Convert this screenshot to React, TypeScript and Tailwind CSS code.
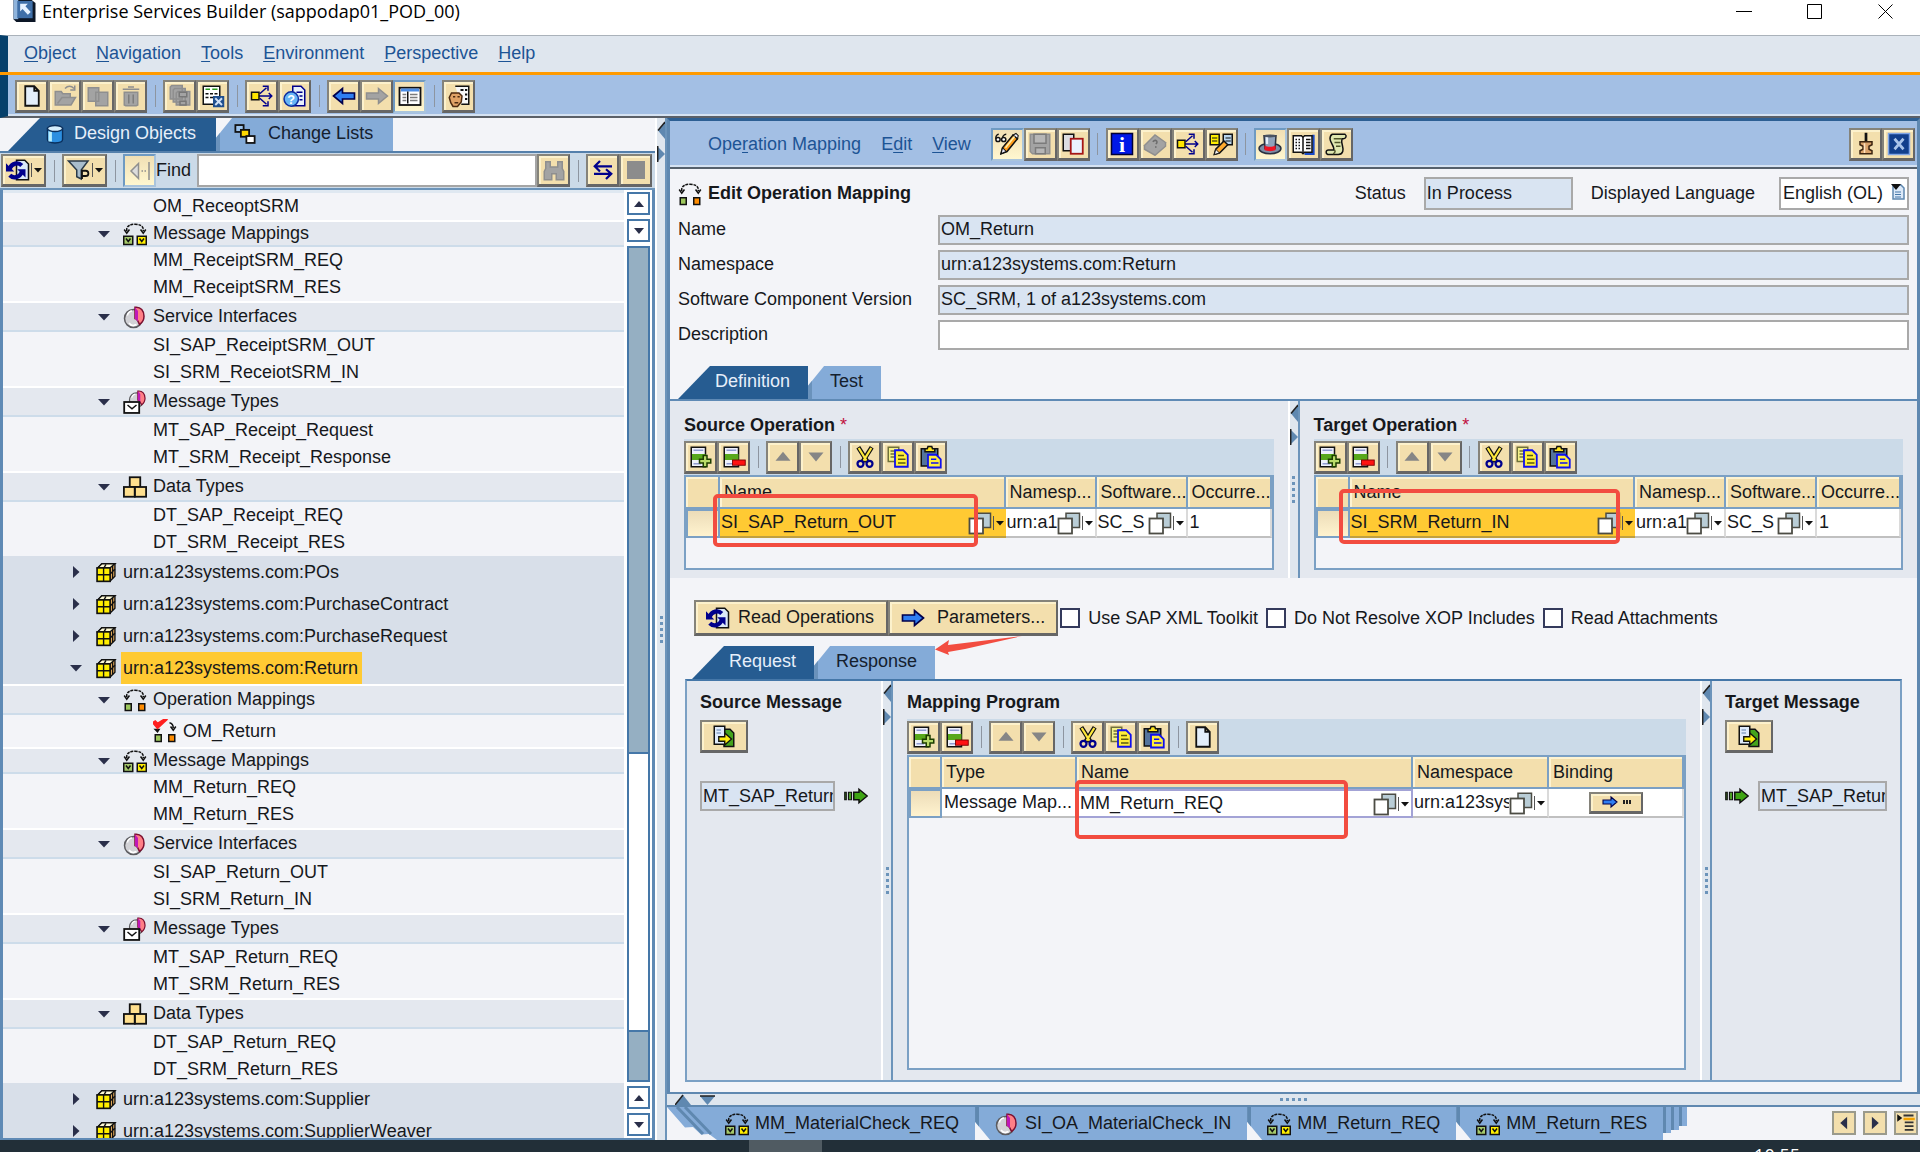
import React, { useState } from 'react';

const NAVY = '#00008c';
const INK = '#111';
const GREY = '#8f8f8f';
const GREY_FILL = '#a3a3a3';

const curve = (
  <g fill="none" stroke={INK} strokeWidth="1">
    <path d="M2.5 6V4.500C3 2.500 5 1.500 8 1.500s5 1 5.500 3V6" strokeDasharray="2 .6" />
    <path d="M.8 5l1.700 2.500L4.300 5M11.700 5l1.800 2.500L15.200 5" />
  </g>
);

const where = (
  <>
    <path d="M5 8h9M6.500 6.500l4.500-4M6.500 9.500l4.500 4M12.500 6l2 2-2 2M8.500 1.500h3.500v3M8.500 14.500h3.500v-3" fill="none" stroke={NAVY} />
    <rect x="1" y="5.500" width="5" height="5" fill="#ffe600" stroke={INK} />
  </>
);

const rowSheet = (
  <>
    <rect x="1.500" y="1.500" width="9.500" height="13" fill="#eef1fb" stroke={INK} />
    <path d="M3 3.500h6.500M3 12.500h5" stroke="#8f9ad0" />
    <rect x="2" y="6" width="9" height="4" fill="#58a81c" />
  </>
);

const cycle = (
  <>
    <path d="M7 1.500h5.500L15 4v10.500H7z" fill="#dce9f8" stroke={INK} />
    <path d="M10.500 5C8 2.500 4 3.500 2.500 7M2.500 11.500c2.500 2.500 6.500 1.500 8-2" fill="none" stroke={NAVY} strokeWidth="2.800" />
    <path d="M0 3.500v5.500h5.500zM13 13V7.500H7.500z" fill={NAVY} />
  </>
);

const globe = (
  <>
    <circle cx="7" cy="9" r="6" fill="#d2d2d6" stroke="#5c5c60" />
    <path d="M3 7c0-2 2-3 3-3M4 12c1 1.500 3 2 5 1" stroke="#fff" fill="none" />
    <path d="M8 1.500c4-.5 6 2.500 6 6s-1.500 4.500-3 5.500C10 11 9.500 9 8 9z" fill="#ff7f86" stroke="#7b1030" />
    <path d="M8 1.500v7.500l2 2V4z" fill="#c018b8" />
  </>
);

const icons: Record<string, React.ReactNode> = {
  newDoc: <path d="M3.500 1.500h6l3 3v10h-9zM9.500 1.500v3h3" fill="#e3eefa" stroke={INK} strokeWidth="1.200" />,
  open: <g fill={GREY_FILL} stroke={GREY}><path d="M1.500 14V5h4l1 1.500h5V9h3.500L12 14zM3 13l3-4h6" /><path d="M8 3c2-2 4-2 6 0M14.500 1v3h-3" fill="none" /></g>,
  copyDis: <g fill={GREY_FILL} stroke={GREY}><path d="M1.500 2.500h7v9h-7zM6.500 5.500h8v9h-8z" /></g>,
  trash: <g fill={GREY_FILL} stroke={GREY}><path d="M3.500 5.500h9V14l-1 .5h-7l-1-.5zM2.500 3.500h11M6 2h4" /><path d="M6.500 7v6M9.500 7v6" stroke="#7d7d7d" /></g>,
  saveAll: <g fill={GREY_FILL} stroke={GREY}><path d="M1.500 2l1-1h7v9h-8zM3.500 4l1-1h7v9h-8zM5.500 6l1-1h8v9h-9z" /><path d="M7.500 5.500h5v3h-5zM8 11.500h4v2.500H8z" stroke="#777" /></g>,
  checkX: (
    <>
      <path d="M1.500 1.500h11v9l-3 3h-8z" fill="#fff" stroke={INK} />
      <path d="M3 3.500h3M7.500 3.500H11" stroke="#2c9a1e" />
      <path d="M3 6.500h2M6 6.500h2M9 6.500h2M3 9h2M6 9h2" stroke={INK} />
      <rect x="8" y="8" width="7.500" height="7.500" fill="#1f4f8f" />
      <path d="M9.500 9.500l4.500 4.500M14 9.500L9.500 14" stroke="#cfe0f6" strokeWidth="1.300" />
    </>
  ),
  where,
  helpDoc: (
    <>
      <path d="M6.500 1.500H12L14.500 4v10.500h-8z" fill="#e8f0fb" stroke={NAVY} />
      <path d="M9 5.500h4M11 8h2M11 10.500h2" stroke={NAVY} />
      <circle cx="5.500" cy="10" r="4.800" fill="#67b5f5" stroke="#0c2ea0" />
      <text x="5.500" y="13" fontSize="8.500" fontWeight="bold" textAnchor="middle" fill="#fff">?</text>
    </>
  ),
  back: <path d="M1 8l6-5v3h8v4H7v3z" fill="#2f7ef2" stroke="#00004c" strokeWidth="1.100" />,
  fwdDis: <path d="M15 8L9 3v3H1v4h8v3z" fill={GREY_FILL} stroke={GREY} />,
  panes: (
    <>
      <rect x="1" y="2.500" width="14" height="11.500" fill="#fff" stroke={INK} strokeWidth="1.200" />
      <path d="M2 4h12" stroke="#4c8ee6" strokeWidth="2" />
      <path d="M6.500 5v8" stroke={INK} />
      <path d="M3 7h2.500M3 9h2.500M3 11h2.500M8 7h5M8 9h5M8 11h5" stroke="#7c7c7c" />
    </>
  ),
  person: (
    <>
      <path d="M5.500 1.500h9v12h-5" fill="#f7f7f7" stroke={INK} />
      <path d="M9 4h2M12 4h1.500M12 7h1.500M12 10h1.500" stroke={INK} strokeWidth="1.400" />
      <path d="M1.500 9l1.500-3h5l2 2-.5 4-2.500 3H4l-1.500-2.500z" fill="#e0a266" stroke="#4c2a10" />
      <path d="M4 8.500h1.500M7 8.500h1.500M5 12.500h2.500" stroke="#4c2a10" />
    </>
  ),
  cylinder: (
    <>
      <path d="M2.500 4v8c0 1.500 2 2.500 5.500 2.500s5.500-1 5.500-2.500V4z" fill="#2c8fe0" stroke="#0a2f5c" />
      <path d="M4.500 6v7.500" stroke="#b9f0ff" strokeWidth="2.500" />
      <ellipse cx="8" cy="4" rx="5.500" ry="2.200" fill="#d6eefc" stroke="#0a2f5c" />
    </>
  ),
  changes: (
    <g stroke={INK} strokeWidth="1.300">
      <rect x="1" y="1.500" width="6" height="5" fill="#9cc4ee" />
      <rect x="5" y="5" width="6" height="5" fill="#ffd800" />
      <rect x="9" y="9.500" width="6" height="5" fill="#fff" />
    </g>
  ),
  cycle,
  funnel: (
    <>
      <path d="M1 2h13L9.500 8v6l-3-1.500V8z" fill="#a9bdcc" stroke="#2b3a48" />
      <path d="M10 14V8.500h2.500a1.700 1.700 0 010 3.500H10" fill="none" stroke={INK} strokeWidth="1.200" />
    </>
  ),
  collapse: <><path d="M7 3L2 8l5 5z" fill="#dcdcdc" stroke={GREY} /><path d="M9 8h1M11 8h1M14 2v12" stroke={GREY} /></>,
  find: <g fill={GREY_FILL} stroke={GREY}><path d="M2.500 2.500h3V6h5V2.500h3V7l1 2v5.500h-5v-4h-3v4h-5V9l1-2z" /></g>,
  swap: <path d="M14 5.500H3M6 2L2.500 5.500 6 9M2 10.500h11M10 7.500l3.500 3-3.500 3.500" fill="none" stroke={NAVY} strokeWidth="1.500" />,
  stop: <rect x="2" y="2" width="12" height="12" fill="#8c8c8c" />,
  opMap: (
    <>
      {curve}
      <rect x="1.500" y="10.500" width="4" height="4.500" fill="#9dc75c" stroke={INK} />
      <rect x="10.500" y="10.500" width="4" height="4.500" fill="#ff8c00" stroke={INK} />
    </>
  ),
  opMapDone: (
    <>
      <path d="M11 2.500c1.500.3 2.500 1 2.500 3.500M11.700 5l1.800 2.500L15.200 5M1.500 7h2.500L3 8.500z" fill="none" stroke={INK} />
      <rect x="1.500" y="10.500" width="4" height="4.500" fill="#9dc75c" stroke={INK} />
      <rect x="10.500" y="10.500" width="4" height="4.500" fill="#ff8c00" stroke={INK} />
      <path d="M0 2.500l3 3.500L9 .5 8 0 3 3 1.500 1.500z" fill="#ff2020" stroke="#ff2020" strokeWidth="1.300" />
    </>
  ),
  msgMap: (
    <>
      {curve}
      <rect x=".5" y="9.500" width="6" height="5.500" fill="#a5c96a" stroke={INK} />
      <rect x="9.500" y="9.500" width="6" height="5.500" fill="#ffee00" stroke={INK} />
      <path d="M2 11l1.500 2L5 11M11 11l1.500 2 1.500-2" fill="none" stroke={INK} />
    </>
  ),
  globe,
  msgType: (
    <>
      <g transform="translate(3.500 -.5) scale(.8)">{globe}</g>
      <rect x=".8" y="8" width="10" height="7.300" fill="#fff" stroke={INK} strokeWidth="1.200" />
      <path d="M3 10l3 2.500L9 10" fill="none" stroke={INK} />
    </>
  ),
  dataType: (
    <g fill="#ffdf8e" stroke={INK} strokeWidth="1.200">
      <rect x="4.500" y="1.500" width="7" height="6.500" />
      <rect x=".6" y="8" width="7.200" height="6.500" />
      <rect x="8" y="8" width="7.400" height="6.500" />
    </g>
  ),
  pack: (
    <>
      <path d="M2 5l3-3h9.500v9l-3.500 3.500" fill="#f5b860" stroke={INK} />
      <path d="M2 5l3-3h9.500L11 5z" fill="#fffbd6" stroke={INK} />
      <rect x="1.500" y="5" width="9.500" height="9.800" fill="#ffee00" stroke={INK} strokeWidth="1.200" />
      <path d="M6.250 5v10M1.500 10H11M11 9.500l3.500-3.500M8 2.500L6.500 5M12.800 3.500v9" stroke={INK} fill="none" />
    </>
  ),
  glasses: (
    <>
      <path d="M.5 4.500c0-3 2-3 2-3M5 4.500c0-3 2.500-3 2.500-3" fill="none" stroke={INK} />
      <circle cx="2" cy="5" r="1.400" fill="#fff" stroke={INK} />
      <circle cx="5.800" cy="5" r="1.400" fill="#fff" stroke={INK} />
      <path d="M4 14.500l1-4 7-8.500 3 2.500-7 8.500z" fill="#ff9c1a" stroke={INK} />
      <path d="M12 2l3 2.500 .5-2-1.500-1.500zM4 14.500l1-4 2.500 2.500z" fill="#e9e9f8" stroke={INK} strokeWidth=".7" />
      <path d="M7 10.500l6-7.500" stroke="#fff2b0" />
    </>
  ),
  saveDis: <g fill={GREY_FILL} stroke={GREY}><path d="M1.500 1.500h13v13H3l-1.500-1.500z" /><path d="M4 1.500h8v6H4zM5 10.500h6.500v4H5z" fill="#b6b6b6" stroke="#7b7b7b" /></g>,
  twoDocs: <><rect x="1.500" y="1.500" width="7" height="11" fill="#dcdde2" stroke={INK} /><rect x="6.500" y="4.500" width="8" height="10" fill="#eaf3ff" stroke="#a51616" strokeWidth="1.200" /></>,
  info: (
    <>
      <rect x="1" y="1" width="14" height="14" fill="#0018e8" stroke="#000038" />
      <text x="8" y="13.200" fontSize="14.500" fontWeight="bold" fontFamily="Liberation Serif" textAnchor="middle" fill="#fff">i</text>
    </>
  ),
  bookDis: <g fill={GREY_FILL} stroke={GREY}><path d="M1 9l7-7 7 5-7 7z" /><path d="M1 9v2.500L8 15.500l7-6V7" /><path d="M6.500 6.500c2-2 4 0 2 1.500M8 10h1" stroke="#6c6c6c" fill="none" /></g>,
  mapEdit: (
    <>
      <rect x=".8" y="1.500" width="6" height="7" fill="#ffee00" stroke={INK} />
      <rect x="9.500" y="1.500" width="6" height="7" fill="#b9d6ee" stroke={INK} />
      <path d="M2 4h3.500M2 6h3.500M11 4h3.500M11 6h3.500" stroke={INK} strokeWidth=".8" />
      <path d="M3.500 15l1-3.500L10 6l2.500 2.500L7 14z" fill="#ffab2e" stroke={INK} />
      <path d="M3.500 15l1-3.500L7 14z" fill="#f2f2f2" stroke={INK} strokeWidth=".6" />
    </>
  ),
  hat: (
    <>
      <ellipse cx="8" cy="11" rx="7.300" ry="3.500" fill="#7d8ea6" stroke="#2a3140" />
      <path d="M4 2.500h8l-.6 8.500c-2 1-5 1-6.800 0z" fill="#8fa2bb" stroke="#2a3140" />
      <path d="M6 3v5" stroke="#e5eefa" strokeWidth="1.500" />
      <path d="M4.300 9c2 1.200 5.300 1.200 7.400 0v3c-2 1-5.400 1-7.400 0z" fill="#f01424" />
      <ellipse cx="8" cy="2.600" rx="4" ry="1" fill="#4a5362" />
    </>
  ),
  bookOpen: (
    <>
      <path d="M14 2.500h1v12H9" stroke="#1749c8" strokeWidth="1.500" fill="none" />
      <path d="M1.500 2.500H7L8 3.500l1-1h5v11H9l-1 1-1-1H1.500z" fill="#fff" stroke={INK} />
      <path d="M8 3.500v11M3 5h1M5 5h1M3 7h1M5 7h1M3 9h1M5 9h1M3 11h1M5 11h1M10 5h3M10 7h3M10 9h3M10 11h3" stroke={INK} />
    </>
  ),
  scroll: (
    <>
      <path d="M5.500 1.500h8.500c1.500 1 .5 3-1 3h-1c-1 3 1.500 6 .5 8.500-.5 1.500-2 2-3 2h-7c-1.500-.5-1.500-3 .5-3h3.500C7 9.500 4 7 4 4.500c0-1.500.5-2.500 1.500-3z" fill="#dfe6ae" stroke={INK} />
      <path d="M6.500 4.500h5M7 7h4M8 9.500h3M6.500 12c1 0 1.500 2-.5 2.500" stroke="#50552a" fill="none" />
    </>
  ),
  pin: (
    <>
      <path d="M8 .5v7" stroke={INK} strokeWidth="1.800" />
      <path d="M4 6.500h8v2l-2 1v2l2 1v2H4v-2l2-1v-2l-2-1z" fill="#d9a26b" stroke="#3b2410" />
      <path d="M7 7.500v6.500" stroke="#ffe3c0" />
    </>
  ),
  closeBox: <><rect x="1" y="1" width="14" height="14" fill="#123f8c" stroke="#7fa5e6" /><path d="M5 4.500l6 7M11 4.500l-6 7" stroke="#a9c4ea" strokeWidth="1.800" /></>,
  addRow: <>{rowSheet}<path d="M9.500 7h2.500v2.500H14.500V12H12v2.500H9.500V12H7V9.500h2.500z" fill="#b9dc6a" stroke="#1c3d00" /></>,
  delRow: <>{rowSheet}<rect x="7" y="10" width="8.500" height="3.500" fill="#ff1212" stroke="#7a0000" strokeWidth=".6" /></>,
  up: <path d="M8 4.500l5 6H3z" fill="#868686" />,
  down: <path d="M8 11l5-6H3z" fill="#868686" />,
  cut: (
    <>
      <path d="M3.500 1.500L9.500 11M12.500 1.500L6.500 11" stroke={INK} strokeWidth="3" />
      <path d="M3.800 2L9 10.500M12.200 2L7 10.500" stroke="#ffe93b" strokeWidth="1.500" />
      <circle cx="5" cy="12.500" r="2" fill="none" stroke={NAVY} strokeWidth="1.500" />
      <circle cx="11" cy="12.500" r="2" fill="none" stroke={NAVY} strokeWidth="1.500" />
    </>
  ),
  copy: (
    <>
      <path d="M1.500 1.500h7v9.500h-7z" fill="#f4f08a" stroke="#70713a" />
      <path d="M3 4h3M3 6h3M3 8h3" stroke="#70713a" />
      <path d="M6 3.500h5.500L14.500 6.500v8H6z" fill="#ffee38" stroke="#1010ee" strokeWidth="1.200" />
      <path d="M8 7h4M8 9.500h5M8 12h5" stroke="#5b5a10" />
    </>
  ),
  paste: (
    <>
      <rect x="1.500" y="2.500" width="11" height="11.500" fill="#54749c" stroke={INK} />
      <path d="M4 4.500V2.500h1.500L6 1h2.500L9 2.500h1.500v2z" fill="#ffe61c" stroke={INK} />
      <path d="M6 6.500h5.500L14.500 9.500v5.500H6z" fill="#ffee38" stroke="#1010ee" strokeWidth="1.200" />
      <path d="M8 9.500h3.500M8 12h5" stroke="#1010ee" />
    </>
  ),
  assign: (
    <>
      <path d="M8 3.500h4l2.500 2.500v9H8z" fill="#44a31c" stroke={INK} />
      <path d="M1.500 1.500h7v12h-7z" fill="#dfeafb" stroke={INK} />
      <path d="M3 4h3M3 6h3" stroke="#8aa4c8" />
      <path d="M4.500 8.500h4V6l4.500 4-4.500 4v-2.500h-4z" fill="#ffee10" stroke={INK} strokeWidth=".9" />
    </>
  ),
  flow: (
    <>
      <path d="M.5 5.500h1v5h-1zM3 5.500h2v5H3z" fill="#54b02a" stroke={INK} strokeWidth=".8" />
      <path d="M6.500 5.500H10V3.500l5.500 4.500-5.500 4.500v-2H6.500z" fill="#3fa414" stroke={INK} />
    </>
  ),
  go: <path d="M15 8L9 3v3H1v4h8v3z" fill="#2f7ef2" stroke="#00004c" strokeWidth="1.100" />,
  valueHelp: <><rect x="6" y="1.500" width="9" height="9.500" fill="#b9cdd6" stroke="#4c4c44" /><rect x="1" y="5" width="9" height="10" fill="#fff" stroke="#4c4c44" strokeWidth="1.200" /></>,
};

const Icon: React.FC<{ name: string; className?: string }> = ({ name, className = 'h-6 w-6' }) => (
  <svg viewBox="0 0 16 16" className={`shrink-0 ${className}`} aria-hidden="true">{icons[name]}</svg>
);

const raised = 'border-2 border-b-3 border-t-[#85837a] border-l-[#85837a] border-r-[#666] border-b-[#666] bg-[#f3dfad] shadow-[inset_1px_1px_0_1px_#fcf1cc]';
const pressed = 'border-2 border-t-[#6f9ac2] border-l-[#6f9ac2] border-r-[#a9c4dc] border-b-[#a9c4dc] bg-linear-to-b from-[#f0dfb4] to-[#fff7d0]';

const IconButton: React.FC<{ name: string; active?: boolean; className?: string }> = ({ name, active, className = 'w-[33px]' }) => (
  <button type="button" aria-label={name} className={`flex h-[33px] shrink-0 items-center justify-center ${active ? pressed : raised} ${className}`}>
    <Icon name={name} />
  </button>
);

const Sep = () => (
  <span className="flex w-4 shrink-0 justify-center"><span className="h-[22px] w-px bg-[#8d95a0]" /></span>
);

// '|' draws a separator, a leading '*' marks a pressed button
const Tools: React.FC<{ items: string[] }> = ({ items }) => (
  <div className="flex items-center">
    {items.map((item, i) =>
      item === '|' ? <Sep key={i} /> : <IconButton key={i} name={item.replace('*', '')} active={item.startsWith('*')} />
    )}
  </div>
);

const DropMark = () => (
  <svg viewBox="0 0 12 18" className="h-[18px] w-3 shrink-0" aria-hidden="true">
    <path d="M1.500 2v14" stroke="#555" />
    <path d="M4 7h8l-4 4.500z" fill="#111" />
  </svg>
);

const DropButton: React.FC<{ name: string }> = ({ name }) => (
  <button type="button" aria-label={name} className={`flex h-[33px] w-[45px] shrink-0 items-center justify-center ${raised}`}>
    <Icon name={name} />
    <DropMark />
  </button>
);

const Splitter = () => (
  <div className="grid w-3 shrink-0 grid-rows-[1fr_auto_1fr] border-r-2 border-l-2 border-l-white border-r-[#6c94ba] bg-[#dfe6ee]">
    <svg viewBox="0 0 8 44" className="h-11 w-2" aria-hidden="true">
      <path d="M8 4v17L1 12.500z" fill="#5f88b0" />
      <path d="M8 4L1 12.500" stroke="#222" strokeWidth="1.500" />
      <path d="M0 28v16l8-8z" fill="#5f88b0" />
      <path d="M.7 28v16" stroke="#222" strokeWidth="1.500" />
    </svg>
    <div className="flex flex-col items-center gap-[3px]">
      {[0, 1, 2, 3, 4].map((d) => <span key={d} className="h-[3px] w-[3px] bg-[#6c94ba]" />)}
    </div>
  </div>
);

const Menu: React.FC<{ label: string; hot: number }> = ({ label, hot }) => (
  <button type="button" className="text-[#1d5495]">
    {label.slice(0, hot)}<u className="underline-offset-2">{label[hot]}</u>{label.slice(hot + 1)}
  </button>
);

const Tab: React.FC<{ label: string; icon?: string; active?: boolean }> = ({ label, icon, active }) => (
  <button
    type="button"
    role="tab"
    aria-selected={!!active}
    className={active
      ? `flex h-[33px] items-center gap-2 bg-[#265c91] pb-[2px] text-[#e6effa] [clip-path:polygon(32px_0,100%_0,100%_100%,0_100%)] ${icon ? 'pr-5 pl-9' : 'pr-[18px] pl-[37px]'}`
      : `flex h-[33px] items-center gap-3 border-l-4 border-[#6a92bb] bg-[#84abd8] pb-[2px] text-[#14202e] [clip-path:polygon(16px_0,100%_0,100%_100%,0_100%,0_60%)] ${icon ? 'pr-5 pl-[14px]' : 'pr-[18px] pl-[18px]'}`}
  >
    {icon && <Icon name={icon} className="h-[22px] w-[22px]" />}
    {label}
  </button>
);

interface Node {
  kind: 'ns' | 'group' | 'leaf';
  label: string;
  icon?: string;
  open?: boolean;
  tight?: boolean;
}

const tree: Node[] = [
  { kind: 'leaf', label: 'OM_ReceoptSRM' },
  { kind: 'group', label: 'Message Mappings', icon: 'msgMap', tight: true },
  { kind: 'leaf', label: 'MM_ReceiptSRM_REQ' },
  { kind: 'leaf', label: 'MM_ReceiptSRM_RES' },
  { kind: 'group', label: 'Service Interfaces', icon: 'globe' },
  { kind: 'leaf', label: 'SI_SAP_ReceiptSRM_OUT' },
  { kind: 'leaf', label: 'SI_SRM_ReceiotSRM_IN' },
  { kind: 'group', label: 'Message Types', icon: 'msgType' },
  { kind: 'leaf', label: 'MT_SAP_Receipt_Request' },
  { kind: 'leaf', label: 'MT_SRM_Receipt_Response' },
  { kind: 'group', label: 'Data Types', icon: 'dataType' },
  { kind: 'leaf', label: 'DT_SAP_Receipt_REQ' },
  { kind: 'leaf', label: 'DT_SRM_Receipt_RES' },
  { kind: 'ns', label: 'urn:a123systems.com:POs' },
  { kind: 'ns', label: 'urn:a123systems.com:PurchaseContract' },
  { kind: 'ns', label: 'urn:a123systems.com:PurchaseRequest' },
  { kind: 'ns', label: 'urn:a123systems.com:Return', open: true },
  { kind: 'group', label: 'Operation Mappings', icon: 'opMap' },
  { kind: 'leaf', label: 'OM_Return', icon: 'opMapDone' },
  { kind: 'group', label: 'Message Mappings', icon: 'msgMap', tight: true },
  { kind: 'leaf', label: 'MM_Return_REQ' },
  { kind: 'leaf', label: 'MM_Return_RES' },
  { kind: 'group', label: 'Service Interfaces', icon: 'globe' },
  { kind: 'leaf', label: 'SI_SAP_Return_OUT' },
  { kind: 'leaf', label: 'SI_SRM_Return_IN' },
  { kind: 'group', label: 'Message Types', icon: 'msgType' },
  { kind: 'leaf', label: 'MT_SAP_Return_REQ' },
  { kind: 'leaf', label: 'MT_SRM_Return_RES' },
  { kind: 'group', label: 'Data Types', icon: 'dataType' },
  { kind: 'leaf', label: 'DT_SAP_Return_REQ' },
  { kind: 'leaf', label: 'DT_SRM_Return_RES' },
  { kind: 'ns', label: 'urn:a123systems.com:Supplier' },
  { kind: 'ns', label: 'urn:a123systems.com:SupplierWeaver' },
];

const Twisty: React.FC<{ open: boolean }> = ({ open }) => (
  <button type="button" aria-label={open ? 'Collapse' : 'Expand'} className="w-[14px] shrink-0">
    <svg viewBox="0 0 14 14" className="h-[14px] w-[14px]">
      <path d={open ? 'M1 4h12l-6 6.500z' : 'M4 1v12l6.500-6z'} fill="#2a2f4a" />
    </svg>
  </button>
);

const TreeRow: React.FC<{ node: Node; selected: boolean; onSelect: () => void }> = ({ node, selected, onSelect }) => {
  const label = (
    <span onClick={onSelect} className={`ml-1 flex h-full items-center pl-[2px] pr-1 ${selected ? 'bg-[#ffca33]' : ''}`}>{node.label}</span>
  );
  if (node.kind === 'ns') {
    return (
      <li className="flex h-8 shrink-0 items-center bg-[#d8dfe9] pl-[66px]">
        <Twisty open={!!node.open} />
        <Icon name="pack" className="ml-3 h-[22px] w-[22px]" />
        {label}
      </li>
    );
  }
  if (node.kind === 'group') {
    return (
      <li className={`flex shrink-0 items-center border-y-2 border-t-white border-b-[#cddcea] bg-[#e4e8ef] pl-[94px] ${node.tight ? 'h-[27px]' : 'h-[31px]'}`}>
        <Twisty open />
        <Icon name={node.icon!} className="ml-3 h-6 w-6" />
        {label}
      </li>
    );
  }
  return (
    <li className={`flex shrink-0 items-center ${node.icon ? 'h-8 pl-[150px]' : 'h-[27px] pl-[144px]'}`}>
      {node.icon && <Icon name={node.icon} />}
      {label}
    </li>
  );
};

const ScrollButton: React.FC<{ dir: 'up' | 'down' }> = ({ dir }) => (
  <button type="button" aria-label={`Scroll ${dir}`} className="flex h-[23px] shrink-0 items-center justify-center border-2 border-[#4577a8] bg-white">
    <svg viewBox="0 0 12 8" className="h-2 w-3"><path d={dir === 'up' ? 'M6 1l5 6H1z' : 'M6 7l5-6H1z'} fill="#2a2f4a" /></svg>
  </button>
);

const Navigator = () => {
  const [selected, setSelected] = useState('urn:a123systems.com:Return');
  return (
    <aside className="flex w-[655px] shrink-0 flex-col bg-[#f3f4f8]">
      <div role="tablist" className="flex pl-2">
        <Tab label="Design Objects" icon="cylinder" active />
        <Tab label="Change Lists" icon="changes" />
      </div>
      <div className="flex h-[39px] shrink-0 items-center border-y-2 border-t-[#5580ab] border-b-[#6c94ba] bg-[#cbdae8] pr-[3px] pl-px">
        <DropButton name="cycle" />
        <Sep />
        <DropButton name="funnel" />
        <Sep />
        <IconButton name="collapse" active />
        <label htmlFor="find" className="pr-[6px]">Find</label>
        <input id="find" className="h-[33px] min-w-0 flex-1 border-2 border-[#a5a5a5] bg-white px-1" />
        <Tools items={['find', '|', 'swap', 'stop']} />
      </div>
      <div className="flex min-h-0 flex-1 border-x-3 border-b-2 border-[#5f8ab5]">
        <ul className="flex min-w-0 flex-1 flex-col overflow-hidden border-t-3 border-[#dfe8f1]">
          {tree.map((node, i) => (
            <TreeRow key={i} node={node} selected={node.label === selected} onSelect={() => setSelected(node.label)} />
          ))}
        </ul>
        <div className="flex w-7 shrink-0 flex-col gap-1 bg-white py-[2px] pr-[2px] pl-[3px]">
          <ScrollButton dir="up" />
          <ScrollButton dir="down" />
          <div className="flex min-h-0 flex-1 flex-col border-2 border-[#4577a8] bg-[#95afc2]">
            <div className="flex-[509]" />
            <div className="flex-[279] border-y-2 border-[#4577a8] bg-white" />
            <div className="flex-[49]" />
          </div>
          <ScrollButton dir="up" />
          <ScrollButton dir="down" />
        </div>
      </div>
    </aside>
  );
};

const Field: React.FC<{ id: string; label: string; value?: string; editable?: boolean }> = ({ id, label, value = '', editable }) => (
  <div className="flex items-center">
    <label htmlFor={id} className="w-[260px] shrink-0 pb-[2px]">{label}</label>
    <input
      id={id}
      defaultValue={value}
      readOnly={!editable}
      className={`h-[30px] min-w-0 flex-1 border-2 border-[#a9a9a9] px-px pb-[2px] ${editable ? 'bg-white' : 'bg-[#d9e4f2]'}`}
    />
  </div>
);

const Mark: React.FC<{ className: string }> = ({ className }) => (
  <div className={`pointer-events-none absolute rounded-[5px] border-4 border-[#f24c40] ${className}`} />
);

const HelpCell: React.FC<{ label: string; value: string }> = ({ label, value }) => (
  <div className="flex items-center pr-[2px]">
    <input aria-label={label} defaultValue={value} className="h-[25px] min-w-0 flex-1 pl-px" />
    <Icon name="valueHelp" />
    <DropMark />
  </div>
);

const th = 'h-8 overflow-hidden border-r-2 border-b-2 border-[#7ba0c4] bg-[#f3dfad] pl-1 text-left font-normal whitespace-nowrap shadow-[inset_2px_2px_0_#fdf3d2]';
const td = 'h-7 border-r-2 border-b-2 border-r-[#dadada] border-b-[#c0c0c0] bg-white p-0';
const handle = 'h-7 border-2 border-[#7ba0c4] bg-linear-to-b from-[#ecdcb8] to-[#fff3cf] p-0';

const Operation: React.FC<{ title: string; value: string; markClass: string }> = ({ title, value, markClass }) => (
  <section className="min-w-0 flex-1 bg-[#e4e8ef] px-[14px] pt-[11px] pb-2">
    <h2 className="h-[27px] font-bold">{title} <span className="font-normal text-[#c01040]">*</span></h2>
    <div className="flex h-9 items-center bg-[#cbdae8]">
      <Tools items={['addRow', 'delRow', '|', 'up', 'down', '|', 'cut', 'copy', 'paste']} />
    </div>
    <div className="relative h-[95px] border-2 border-[#7ba0c4] bg-[#f3f4f8]">
      <table className="w-full table-fixed border-separate border-spacing-0">
        <colgroup>
          <col className="w-[34px]" />
          <col />
          <col className="w-[91px]" />
          <col className="w-[91px]" />
          <col className="w-[84px]" />
        </colgroup>
        <thead>
          <tr>
            <th className={th} />
            <th className={th}>Name</th>
            <th className={th}>Namesp...</th>
            <th className={th}>Software...</th>
            <th className={th}>Occurre...</th>
          </tr>
        </thead>
        <tbody>
          <tr>
            <td className={handle} />
            <td className="h-7 border-b-2 border-[#c0a040] bg-[#ffca33] p-0"><HelpCell label="Name" value={value} /></td>
            <td className={td}><HelpCell label="Namespace" value="urn:a1" /></td>
            <td className={td}><HelpCell label="Software Component" value="SC_S" /></td>
            <td className={`${td} pl-[2px]`}>1</td>
          </tr>
        </tbody>
      </table>
      <Mark className={markClass} />
    </div>
  </section>
);

const Message: React.FC<{ id: string; title: string; value: string; target?: boolean }> = ({ id, title, value, target }) => (
  <section className={`shrink-0 px-[13px] pt-2 ${target ? 'w-[188px]' : 'w-[194px]'}`}>
    <h2 className="mb-1 h-[27px] font-bold whitespace-nowrap"><label htmlFor={id}>{title}</label></h2>
    <IconButton name="assign" className="w-12" />
    <div className={`mt-7 flex items-center gap-[9px] ${target ? 'flex-row-reverse' : ''}`}>
      <input id={id} readOnly defaultValue={value} className="h-[30px] min-w-0 flex-1 border-2 border-[#a9a9a9] bg-[#d9e4f2] pl-px" />
      <Icon name="flow" />
    </div>
  </section>
);

const MappingProgram = () => (
  <section className="flex min-w-0 flex-1 flex-col px-[14px] pt-2 pb-[10px]">
    <h2 className="mb-[3px] h-[27px] font-bold">Mapping Program</h2>
    <div className="flex h-9 shrink-0 items-center bg-[#cbdae8]">
      <Tools items={['addRow', 'delRow', '|', 'up', 'down', '|', 'cut', 'copy', 'paste', '|', 'newDoc']} />
    </div>
    <div className="relative flex-1 border-2 border-[#7ba0c4] bg-[#f3f4f8]">
      <table className="w-full table-fixed border-separate border-spacing-0">
        <colgroup>
          <col className="w-[33px]" />
          <col className="w-[135px]" />
          <col />
          <col className="w-[136px]" />
          <col className="w-[135px]" />
        </colgroup>
        <thead>
          <tr>
            <th className={th} />
            <th className={th}>Type</th>
            <th className={th}>Name</th>
            <th className={th}>Namespace</th>
            <th className={th}>Binding</th>
          </tr>
        </thead>
        <tbody>
          <tr>
            <td className={handle} />
            <td className={`${td} pl-[2px] whitespace-nowrap`}>Message Map...</td>
            <td className="h-7 border-2 border-[#a3a3d6] bg-white p-0"><HelpCell label="Name" value="MM_Return_REQ" /></td>
            <td className={td}><HelpCell label="Namespace" value="urn:a123systems.com:Return" /></td>
            <td className={td}>
              <button type="button" aria-label="Binding" className={`mx-auto flex h-[22px] w-[54px] items-center justify-center gap-1 ${raised}`}>
                <Icon name="go" className="h-4 w-[18px]" />
                <span className="flex gap-px"><i className="h-1 w-[2px] bg-[#222]" /><i className="h-1 w-[2px] bg-[#222]" /><i className="h-1 w-[2px] bg-[#222]" /></span>
              </button>
            </td>
          </tr>
        </tbody>
      </table>
      <Mark className="top-[23px] left-[166px] h-[59px] w-[273px]" />
    </div>
  </section>
);

const Check: React.FC<{ label: string }> = ({ label }) => (
  <label className="flex items-center gap-2 pr-2 whitespace-nowrap">
    <input type="checkbox" className="h-5 w-5 appearance-none border-2 border-[#343a5c] bg-white" />
    {label}
  </label>
);

const openObjects = [
  { icon: 'msgMap', label: 'MM_MaterialCheck_REQ' },
  { icon: 'globe', label: 'SI_OA_MaterialCheck_IN' },
  { icon: 'msgMap', label: 'MM_Return_REQ' },
  { icon: 'msgMap', label: 'MM_Return_RES' },
];

const NavButton: React.FC<{ label: string; children: React.ReactNode }> = ({ label, children }) => (
  <button type="button" aria-label={label} className="flex h-6 w-6 items-center justify-center border-2 border-[#9a9a8c] bg-[#f3dfad]">
    <svg viewBox="0 0 16 16" className="h-5 w-5 shrink-0">{children}</svg>
  </button>
);

const ObjectTabs = () => (
  <div className="flex h-[33px] shrink-0 items-start bg-[#f3f4f8]">
    <svg viewBox="0 0 50 33" className="h-[33px] w-[50px] shrink-0" aria-hidden="true">
      <path d="M0 0h50v33L42 27l-8 .5-8-7.500-8 .5z" fill="#84abd8" />
      <path d="M10 0l26 27M18 0l26 27" stroke="#5f88b0" strokeWidth="3" />
    </svg>
    {openObjects.map((o, i) => (
      <button
        key={o.label}
        type="button"
        className={`flex h-[33px] items-center gap-[6px] bg-[#84abd8] pr-4 whitespace-nowrap ${i ? 'border-l-4 border-[#5f88b0] pl-4 [clip-path:polygon(0_0,100%_0,100%_100%,15px_100%,0_45%)]' : 'pl-2'}`}
      >
        <Icon name={o.icon} />
        {o.label}
      </button>
    ))}
    <span className="h-[26px] w-2 border-l-3 border-[#5f88b0] bg-[#84abd8]" />
    <span className="h-[23px] w-2 border-l-3 border-[#5f88b0] bg-[#84abd8]" />
    <span className="h-[19px] w-2 border-l-3 border-[#5f88b0] bg-[#84abd8]" />
    <div className="ml-auto flex gap-[7px] pt-1 pr-[2px]">
      <NavButton label="Previous"><path d="M10.500 3v10L5 8z" fill="#2a2f4a" /></NavButton>
      <NavButton label="Next"><path d="M5.500 3v10L11 8z" fill="#2a2f4a" /></NavButton>
      <NavButton label="List">
        <path d="M1 1l4 3-4 3z" fill="#111" />
        <path d="M6 2h8M7 7.500h7M7 10.500h7M7 13.500h7" stroke="#333" strokeWidth="1.500" />
        <path d="M6 4.800h9" stroke="#f0a000" strokeWidth="2" />
      </NavButton>
    </div>
  </div>
);

const Editor = () => (
  <main className="flex min-w-0 flex-1 flex-col">
    <div className="flex min-h-0 flex-1 flex-col border-x-3 border-t-3 border-b-2 border-[#5f88b0] border-t-[#2d5f93] bg-[#f3f4f8]">
      <div className="flex h-12 shrink-0 items-center gap-5 border-b-2 border-[#55606c] bg-[#a3bfe4] pr-[2px] pl-[38px] shadow-[inset_0_-2px_0_#d5e2f2]">
        <Menu label="Operation Mapping" hot={3} />
        <Menu label="Edit" hot={1} />
        <Menu label="View" hot={0} />
        <Tools items={['*glasses', 'saveDis', 'twoDocs', '|', 'info', 'bookDis', 'where', 'mapEdit', '|', '*hat', 'bookOpen', 'scroll']} />
        <div className="ml-auto"><Tools items={['pin', 'closeBox']} /></div>
      </div>

      <div className="flex flex-col gap-[5px] px-2 pt-2">
        <div className="flex items-center">
          <Icon name="opMap" />
          <h1 className="flex-1 pl-[6px] font-bold">Edit Operation Mapping</h1>
          <label htmlFor="status" className="pr-[18px]">Status</label>
          <input id="status" readOnly defaultValue="In Process" className="h-[33px] w-[149px] border-2 border-[#a9a9a9] bg-[#d9e4f2] px-px" />
          <label htmlFor="lang" className="pr-6 pl-[18px]">Displayed Language</label>
          <div className="relative">
            <select id="lang" className="h-[33px] w-[130px] appearance-none border-2 border-[#a9a9a9] bg-white pl-[2px]">
              <option>English (OL)</option>
            </select>
            <svg viewBox="0 0 14 16" className="pointer-events-none absolute top-[7px] right-1 h-4 w-[14px]" aria-hidden="true">
              <path d="M2 1h8l3 3v11H2z" fill="#dce9f8" stroke="#5f88b0" strokeWidth="1.500" />
              <path d="M4 8h6M4 10.500h6M4 13h6" stroke="#4577a8" />
              <path d="M0 0h10L5 6z" fill="#111" />
            </svg>
          </div>
        </div>
        <Field id="name" label="Name" value="OM_Return" />
        <Field id="namespace" label="Namespace" value="urn:a123systems.com:Return" />
        <Field id="swcv" label="Software Component Version" value="SC_SRM, 1 of a123systems.com" />
        <Field id="description" label="Description" editable />
      </div>

      <div role="tablist" className="mt-4 flex pl-2">
        <Tab label="Definition" active />
        <Tab label="Test" />
      </div>
      <div className="flex border-t-2 border-[#5f8ab5]">
        <Operation title="Source Operation" value="SI_SAP_Return_OUT" markClass="top-[17px] left-[27px] h-[53px] w-[265px]" />
        <Splitter />
        <Operation title="Target Operation" value="SI_SRM_Return_IN" markClass="top-[12px] left-[23px] h-[55px] w-[281px]" />
      </div>

      <div className="mt-[22px] flex items-center pl-6">
        <button type="button" className={`flex h-9 items-center gap-2 pr-3 pl-[10px] ${raised}`}><Icon name="cycle" />Read Operations</button>
        <button type="button" className={`flex h-9 items-center gap-3 px-[11px] ${raised}`}><Icon name="go" />Parameters...</button>
        <span className="w-[2px]" />
        <Check label="Use SAP XML Toolkit" />
        <Check label="Do Not Resolve XOP Includes" />
        <Check label="Read Attachments" />
      </div>

      <div role="tablist" className="mt-[10px] flex pl-[22px]">
        <Tab label="Request" active />
        <div className="relative">
          <Tab label="Response" />
          <svg viewBox="0 0 88 20" className="pointer-events-none absolute -top-[10px] left-full h-5 w-[88px]" aria-hidden="true">
            <path d="M0 13.500L14 4l-1 5L87 0 30 13l-17 3 1 3z" fill="#f24c40" />
          </svg>
        </div>
      </div>
      <div className="mx-[15px] mb-[10px] flex min-h-0 flex-1 border-2 border-[#7ba0c4] border-t-[#4577a8] bg-[#e4e8ef]">
        <Message id="srcMsg" title="Source Message" value="MT_SAP_Return_REQ" />
        <Splitter />
        <MappingProgram />
        <Splitter />
        <Message id="tgtMsg" title="Target Message" value="MT_SAP_Return_REQ" target />
      </div>
    </div>

    <div className="grid h-[13px] shrink-0 grid-cols-[1fr_auto_1fr] items-center border-b-2 border-[#5f88b0] bg-[#dfe6ee]">
      <svg viewBox="0 0 44 11" className="ml-2 h-[11px] w-11" aria-hidden="true">
        <path d="M0 11L8 1l8 10z" fill="#5f88b0" />
        <path d="M0 11L8 1" stroke="#222" strokeWidth="1.500" />
        <path d="M25 2h15l-7.500 9z" fill="#5f88b0" />
        <path d="M25 2h15" stroke="#222" strokeWidth="1.500" />
      </svg>
      <div className="flex gap-[3px]">
        {[0, 1, 2, 3, 4].map((d) => <span key={d} className="h-[3px] w-[3px] bg-[#6c94ba]" />)}
      </div>
    </div>
    <ObjectTabs />
  </main>
);

const App: React.FC = () => (
  <div className="flex h-screen flex-col overflow-hidden bg-white font-['Liberation_Sans',Arial,sans-serif] text-[18px] leading-[27px] text-[#16181c]">
    <header className="flex h-[35px] shrink-0 items-start pr-[26px] pl-3">
      <svg viewBox="0 0 24 24" className="h-[23px] w-6" aria-hidden="true">
        <path d="M1 0h19l4 3v20H4l-3-3z" fill="#0c1626" />
        <rect x="1" y="0" width="5" height="20" fill="#8fb4dc" />
        <rect x="5" y="1" width="16" height="18" fill="#3f6fa8" />
        <path d="M8 4h8l-2.500 2.500 5.500 6-3 3-5.500-6L8 12z" fill="#e6f2ff" />
      </svg>
      <span className="pl-[6px] font-['Open_Sans',sans-serif] leading-[22px] text-black">Enterprise Services Builder (sappodap01_POD_00)</span>
      <div className="ml-auto flex gap-[55px] pt-1">
        <button type="button" aria-label="Minimize"><svg viewBox="0 0 16 16" className="h-4 w-4"><path d="M0 7.500h16" stroke="#000" /></svg></button>
        <button type="button" aria-label="Maximize"><svg viewBox="0 0 16 16" className="h-4 w-4"><path d="M.5.5h14v14H.5z" fill="none" stroke="#000" /></svg></button>
        <button type="button" aria-label="Close"><svg viewBox="0 0 16 16" className="h-4 w-4"><path d="M.5.5l14 14M14.500.5l-14 14" stroke="#000" /></svg></button>
      </div>
    </header>

    <nav className="flex h-[37px] shrink-0 items-center gap-5 border-t border-l-8 border-t-[#aab2ba] border-l-[#06406b] bg-[#dfe6ee] pb-[2px] pl-4">
      <Menu label="Object" hot={0} />
      <Menu label="Navigation" hot={0} />
      <Menu label="Tools" hot={0} />
      <Menu label="Environment" hot={0} />
      <Menu label="Perspective" hot={0} />
      <Menu label="Help" hot={0} />
    </nav>
    <div className="h-[3px] shrink-0 bg-[#ff9a00]" />
    <div className="flex h-[43px] shrink-0 items-center border-b-2 border-l-8 border-b-[#5b6068] border-l-[#06406b] bg-[#a3bfe4] pt-px pl-[7px] shadow-[inset_0_-2px_0_#d5e2f2]">
      <Tools items={['newDoc', 'open', 'copyDis', 'trash', '|', 'saveAll', 'checkX', '|', 'where', 'helpDoc', '|', 'back', 'fwdDis', '*panes', '|', 'person']} />
    </div>

    <div className="flex min-h-0 flex-1">
      <Navigator />
      <Splitter />
      <Editor />
    </div>

    <footer className="flex h-3 shrink-0 overflow-hidden bg-[#222f38]">
      <div className="ml-[39%] w-[73px] bg-[#505b62]" />
      <time className="mt-[2px] mr-[120px] ml-auto font-['Open_Sans',sans-serif] text-white">10:55</time>
    </footer>
  </div>
);

export default App;
